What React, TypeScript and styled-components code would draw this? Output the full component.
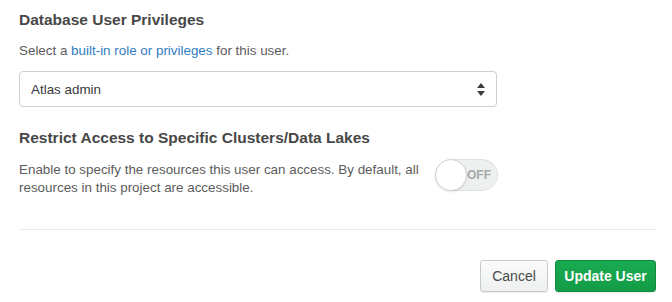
import React from "react";
import styled, { createGlobalStyle } from "styled-components";

const Global = createGlobalStyle`
  html, body { margin: 0; padding: 0; background: #ffffff; }
  body { font-family: "Liberation Sans", Arial, sans-serif; }
`;

const Page = styled.div`
  width: 672px;
  height: 302px;
  box-sizing: border-box;
  padding: 11px 16px 0 19px;
  display: flex;
  flex-direction: column;
`;

const Section = styled.section<{ $gap?: number; $top?: number }>`
  display: flex;
  flex-direction: column;
  margin-top: ${(p) => p.$top ?? 0}px;
  margin-bottom: ${(p) => p.$gap ?? 0}px;
`;

const Heading = styled.h2`
  margin: 0;
  font-size: 15.5px;
  line-height: 18px;
  font-weight: 700;
  color: #474747;
`;

const Desc = styled.p`
  margin: 13px 0 0;
  font-size: 13.4px;
  line-height: 18px;
  color: #5c5c5c;
`;

const Link = styled.a`
  color: #2f7dbf;
  text-decoration: none;
`;

const SelectBox = styled.div`
  margin-top: 11px;
  width: 478px;
  height: 36px;
  box-sizing: border-box;
  border: 1px solid #cfcfcf;
  border-radius: 4px;
  display: flex;
  align-items: center;
  justify-content: space-between;
  padding: 0 11px 0 11px;
  font-size: 13.4px;
  color: #3a3a3a;
`;

const Row = styled.div`
  display: flex;
  align-items: flex-start;
  margin-top: 14px;
`;

const RowText = styled.p`
  margin: 0;
  width: 416px;
  font-size: 13.4px;
  line-height: 18px;
  color: #5c5c5c;
`;

const Toggle = styled.div`
  position: relative;
  margin-top: -2px;
  width: 63px;
  height: 32px;
  box-sizing: border-box;
  border-radius: 16px;
  background: #eef0f0;
  border: 1px solid #dfe2e2;
  display: flex;
  align-items: center;
  justify-content: flex-end;
  padding-right: 6px;
  font-size: 12px;
  font-weight: 700;
  color: #a5a9ab;
`;

const Knob = styled.span`
  position: absolute;
  left: -1px;
  top: -1px;
  width: 32px;
  height: 32px;
  box-sizing: border-box;
  border-radius: 50%;
  background: #ffffff;
  border: 1px solid #d2d5d5;
  box-shadow: 0 1px 2px rgba(0, 0, 0, 0.1);
`;

const Divider = styled.hr`
  margin: 0;
  border: 0;
  border-top: 1px solid #e8ebeb;
  width: 637px;
`;

const Footer = styled.div`
  display: flex;
  justify-content: flex-end;
  gap: 7px;
  width: 637px;
  margin-top: 30px;
`;

const Button = styled.button<{ $primary?: boolean }>`
  height: 32px;
  min-width: ${(p) => (p.$primary ? 101 : 68)}px;
  box-sizing: border-box;
  border-radius: 3px;
  font-family: "Liberation Sans", Arial, sans-serif;
  font-size: 14px;
  padding: 0 8px;
  cursor: pointer;
  border: 1px solid ${(p) => (p.$primary ? "#0f8a43" : "#c5cacb")};
  background: ${(p) =>
    p.$primary ? "linear-gradient(#19aa50, #139c47)" : "linear-gradient(#fbfbfb, #eef0f0)"};
  color: ${(p) => (p.$primary ? "#ffffff" : "#4a4a4a")};
  font-weight: ${(p) => (p.$primary ? 700 : 400)};
  box-shadow: 0 1px 1px rgba(0, 0, 0, 0.08);
`;

const Arrows = () => (
  <svg width="8" height="13" viewBox="0 0 8 13">
    <path d="M4 0 L8 5 L0 5 Z" fill="#3d3d3d" />
    <path d="M4 13 L8 8 L0 8 Z" fill="#3d3d3d" />
  </svg>
);

export default function App() {
  return (
    <>
      <Global />
      <Page>
        <Section>
          <Heading>Database User Privileges</Heading>
          <Desc>
            Select a <Link href="#">built-in role or privileges</Link> for this user.
          </Desc>
          <SelectBox>
            <span>Atlas admin</span>
            <Arrows />
          </SelectBox>
        </Section>
        <Section $top={22} $gap={32}>
          <Heading>Restrict Access to Specific Clusters/Data Lakes</Heading>
          <Row>
            <RowText>
              Enable to specify the resources this user can access. By default, all resources in
              this project are accessible.
            </RowText>
            <Toggle>
              <Knob />
              OFF
            </Toggle>
          </Row>
        </Section>
        <Divider />
        <Footer>
          <Button>Cancel</Button>
          <Button $primary>Update User</Button>
        </Footer>
      </Page>
    </>
  );
}
